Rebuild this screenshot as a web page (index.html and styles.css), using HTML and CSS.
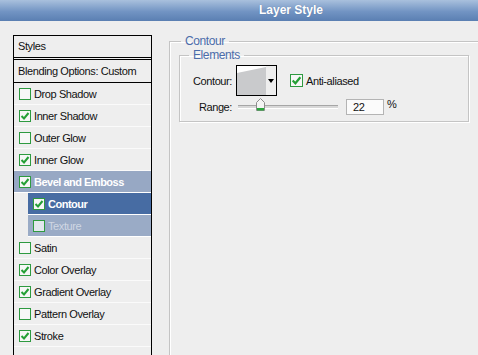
FILE: index.html
```html
<!DOCTYPE html>
<html lang="en">
<head>
    <meta charset="UTF-8">
    <title>Layer Style</title>
    <link rel="stylesheet" href="styles.css">
</head>
<body>
    <div class="titlebar"><span class="title">Layer Style</span></div>

    <div class="dialog">
        <!-- Styles list -->
        <div class="styles-panel">
            <div class="panel-head">Styles</div>
            <div class="panel-blend">Blending Options: Custom</div>
            <ul class="style-list">
                <li class="style-row"><span class="check"></span>Drop Shadow</li>
                <li class="style-row"><span class="check on"><svg viewBox="0 0 10 10"><path d="M1.5 5 L4 7.5 L8.5 2"/></svg></span>Inner Shadow</li>
                <li class="style-row"><span class="check"></span>Outer Glow</li>
                <li class="style-row"><span class="check on"><svg viewBox="0 0 10 10"><path d="M1.5 5 L4 7.5 L8.5 2"/></svg></span>Inner Glow</li>
                <li class="style-row parent"><span class="check on"><svg viewBox="0 0 10 10"><path d="M1.5 5 L4 7.5 L8.5 2"/></svg></span>Bevel and Emboss</li>
                <li class="style-row sub current"><span class="check on"><svg viewBox="0 0 10 10"><path d="M1.5 5 L4 7.5 L8.5 2"/></svg></span>Contour</li>
                <li class="style-row sub muted"><span class="check"></span>Texture</li>
                <li class="style-row"><span class="check"></span>Satin</li>
                <li class="style-row"><span class="check on"><svg viewBox="0 0 10 10"><path d="M1.5 5 L4 7.5 L8.5 2"/></svg></span>Color Overlay</li>
                <li class="style-row"><span class="check on"><svg viewBox="0 0 10 10"><path d="M1.5 5 L4 7.5 L8.5 2"/></svg></span>Gradient Overlay</li>
                <li class="style-row"><span class="check"></span>Pattern Overlay</li>
                <li class="style-row"><span class="check on"><svg viewBox="0 0 10 10"><path d="M1.5 5 L4 7.5 L8.5 2"/></svg></span>Stroke</li>
            </ul>
        </div>

        <!-- Contour settings -->
        <fieldset class="group">
            <legend>Contour</legend>
            <fieldset class="subgroup">
                <legend>Elements</legend>
                <div class="form-grid">
                    <span class="field-label">Contour:</span>
                    <div class="contour-row">
                        <div class="contour-picker">
                            <svg class="contour-preview" viewBox="0 0 29 29" width="29" height="29">
                                <rect x="0" y="0" width="29" height="29" fill="#ffffff"/>
                                <polygon points="0,7 29,1 29,29 0,29" fill="#c9cacc"/>
                            </svg>
                            <span class="picker-arrow"></span>
                        </div>
                        <label class="option"><span class="check big on"><svg viewBox="0 0 10 10"><path d="M1.5 5 L4 7.5 L8.5 2"/></svg></span>Anti-aliased</label>
                    </div>

                    <span class="field-label">Range:</span>
                    <div class="range-row">
                        <div class="slider">
                            <svg class="thumb" viewBox="0 0 9 13" width="9" height="13">
                                <path d="M0.5 4.5 L4.5 0.5 L8.5 4.5 L8.5 12.5 L0.5 12.5 Z" fill="#f4f4f4" stroke="#8c8c8c"/>
                                <rect x="1" y="10" width="7" height="2.5" fill="#2aa63c"/>
                            </svg>
                        </div>
                        <div class="num-input">22</div>
                        <span class="unit">%</span>
                    </div>
                </div>
            </fieldset>
        </fieldset>
    </div>
</body>
</html>
```
FILE: styles.css
```css
body {
    margin: 0;
    width: 478px;
    height: 355px;
    overflow: hidden;
    background-color: #eeeeee;
    font-family: "Liberation Sans", Arial, sans-serif;
    font-size: 11px;
    letter-spacing: -0.4px;
    color: #111111;
}
.titlebar {
    height: 21px;
    line-height: 21px;
    padding-left: 259px;
    background: linear-gradient(#a9c0dd, #7294c3 55%, #5a7fb2);
    color: #ffffff;
    font-size: 12px;
    font-weight: bold;
    letter-spacing: 0;
    text-shadow: 0 0 1px rgba(40,60,100,0.4);
}
.dialog {
    display: flex;
    align-items: flex-start;
    padding: 14px 0 0 13px;
}
.styles-panel {
    width: 139px;
    height: 400px;
    flex-shrink: 0;
    box-sizing: border-box;
    border: 1px solid #000000;
    border-bottom: none;
}
.panel-head {
    height: 21px;
    line-height: 21px;
    padding-left: 4px;
    border-bottom: 3px double #000000;
}
.panel-blend {
    height: 22px;
    line-height: 22px;
    padding-left: 4px;
    border-bottom: 1px solid #000000;
}
.style-list {
    list-style: none;
    margin: 0;
    padding: 0;
}
.style-row {
    display: flex;
    align-items: center;
    gap: 3px;
    height: 21px;
    padding-left: 5px;
    border-bottom: 1px solid #fafafa;
}
.style-row.sub {
    margin-left: 14px;
}
.style-row.parent {
    background-color: #97a8c4;
    color: #ffffff;
    font-weight: bold;
    letter-spacing: -0.5px;
    border-bottom-color: #ffffff;
}
.style-row.current {
    background-color: #476ca3;
    color: #ffffff;
    font-weight: bold;
    letter-spacing: -0.5px;
    border-bottom-color: #ffffff;
}
.style-row.muted {
    background-color: #9aabc6;
    color: #d0d7e3;
    border-bottom-color: #ffffff;
}
.check {
    width: 12px;
    height: 12px;
    flex-shrink: 0;
    box-sizing: border-box;
    border: 1px solid #2e9a40;
    background-color: #f7f7f7;
}
.check.big {
    width: 13px;
    height: 13px;
}
.style-row.muted .check {
    background-color: #e3e7ee;
}
.check svg {
    display: block;
    width: 100%;
    height: 100%;
}
.check path {
    fill: none;
    stroke: #25a036;
    stroke-width: 2;
}
.group {
    margin: -1px 0 0 17px;
    padding: 0 0 0 9px;
    width: 330px;
    height: 400px;
    flex-shrink: 0;
    border: 1px solid #c4c4c4;
    box-shadow: inset 1px 1px 0 #ffffff;
}
.group > legend {
    margin-left: 2px;
    padding: 0 4px;
    color: #4b6caa;
    font-size: 12px;
}
.subgroup {
    margin: 0;
    width: 288px;
    padding: 3px 0 6px 0;
    border: 1px solid #c4c4c4;
    box-shadow: inset 1px 1px 0 #ffffff, 1px 1px 0 #ffffff;
}
.subgroup > legend {
    margin-left: 9px;
    padding: 0 4px;
    color: #4b6caa;
    font-size: 12px;
}
.form-grid {
    display: grid;
    grid-template-columns: 52px auto;
    column-gap: 4px;
    row-gap: 3px;
    align-items: center;
}
.field-label {
    text-align: right;
}
.contour-row {
    display: flex;
    align-items: center;
    gap: 13px;
}
.contour-picker {
    display: flex;
    border: 1px solid #000000;
    width: 41px;
    height: 31px;
    box-sizing: border-box;
    background-color: #eeeeee;
}
.contour-preview {
    display: block;
}
.picker-arrow {
    flex: 1;
    display: flex;
    align-items: center;
    justify-content: center;
}
.picker-arrow::before {
    content: "";
    border-left: 3px solid transparent;
    border-right: 3px solid transparent;
    border-top: 4px solid #000000;
}
.option {
    display: flex;
    align-items: center;
    gap: 3px;
}
.range-row {
    display: flex;
    align-items: center;
}
.slider {
    position: relative;
    width: 100px;
    height: 2px;
    margin: 0 8px 0 2px;
    border-top: 1px solid #a6a6a6;
    border-bottom: 1px solid #ffffff;
    background-color: #d8d8d8;
}
.thumb {
    position: absolute;
    left: 18px;
    top: -8px;
}
.num-input {
    width: 38px;
    height: 16px;
    box-sizing: border-box;
    border: 1px solid #b4b4b4;
    background-color: #fbfbfb;
    padding-left: 6px;
    line-height: 14px;
}
.unit {
    margin-left: 3px;
    align-self: flex-start;
    margin-top: -1px;
}
```
